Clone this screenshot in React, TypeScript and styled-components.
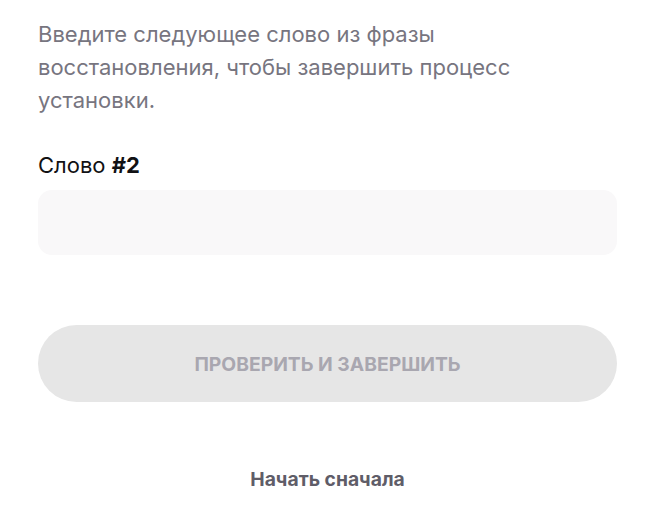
import styled, { createGlobalStyle } from 'styled-components';

const GlobalStyle = createGlobalStyle`
  body {
    margin: 0;
    background: #ffffff;
    font-family: Inter, 'Noto Sans', sans-serif;
  }
`;

const Page = styled.div`
  display: flex;
  flex-direction: column;
  width: 579px;
  padding: 18px 0 0 38px;
`;

const Hint = styled.p`
  margin: 0;
  max-width: 500px;
  font-size: 22px;
  line-height: 33px;
  color: #77757f;
`;

const Label = styled.label`
  margin-top: 34px;
  font-size: 22px;
  line-height: 28px;
  color: #111114;

  b {
    font-weight: 700;
  }
`;

const WordInput = styled.input`
  margin-top: 11px;
  height: 65px;
  border: none;
  border-radius: 14px;
  background: #f9f8f9;
  padding: 0 20px;
  font: inherit;
  font-size: 20px;
  outline: none;
`;

const SubmitButton = styled.button`
  margin-top: 70px;
  height: 77px;
  border: none;
  border-radius: 39px;
  background: #e6e6e6;
  color: #a9a7b0;
  font-family: inherit;
  font-size: 19.3px;
  font-weight: 700;
  cursor: default;
`;

const RestartLink = styled.button`
  margin-top: 66px;
  align-self: center;
  border: none;
  background: none;
  padding: 0;
  font-family: inherit;
  font-size: 19.3px;
  line-height: 22px;
  font-weight: 700;
  color: #5f5d68;
  cursor: pointer;
`;

export default function App() {
  return (
    <>
      <GlobalStyle />
      <Page>
        <Hint>Введите следующее слово из фразы восстановления, чтобы завершить процесс установки.</Hint>
        <Label htmlFor="word">
          Слово <b>#2</b>
        </Label>
        <WordInput id="word" />
        <SubmitButton disabled>ПРОВЕРИТЬ И ЗАВЕРШИТЬ</SubmitButton>
        <RestartLink>Начать сначала</RestartLink>
      </Page>
    </>
  );
}
